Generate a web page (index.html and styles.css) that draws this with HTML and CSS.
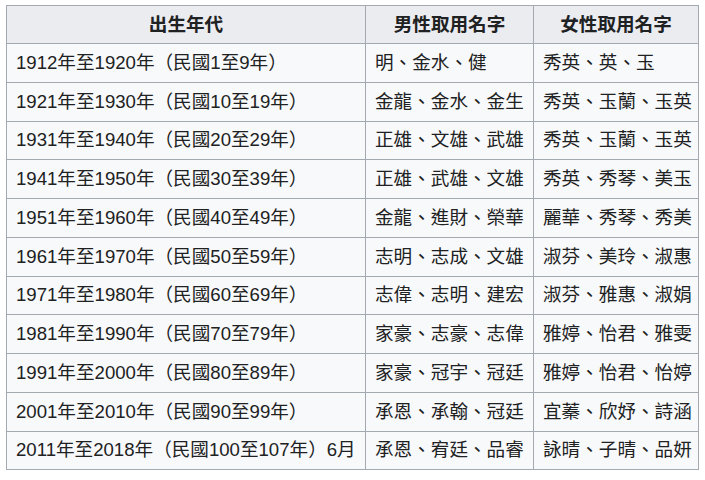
FILE: index.html
```html
<!DOCTYPE html>
<html lang="zh-Hant">
<head>
<meta charset="utf-8">
<link rel="stylesheet" href="styles.css">
</head>
<body>
<table class="wikitable">
  <thead>
    <tr><th class="c1">出生年代</th><th class="c2">男性取用名字</th><th class="c3">女性取用名字</th></tr>
  </thead>
  <tbody>
    <tr><td>1912年至1920年（民國1至9年）</td><td>明、金水、健</td><td>秀英、英、玉</td></tr>
    <tr><td>1921年至1930年（民國10至19年）</td><td>金龍、金水、金生</td><td>秀英、玉蘭、玉英</td></tr>
    <tr><td>1931年至1940年（民國20至29年）</td><td>正雄、文雄、武雄</td><td>秀英、玉蘭、玉英</td></tr>
    <tr><td>1941年至1950年（民國30至39年）</td><td>正雄、武雄、文雄</td><td>秀英、秀琴、美玉</td></tr>
    <tr><td>1951年至1960年（民國40至49年）</td><td>金龍、進財、榮華</td><td>麗華、秀琴、秀美</td></tr>
    <tr><td>1961年至1970年（民國50至59年）</td><td>志明、志成、文雄</td><td>淑芬、美玲、淑惠</td></tr>
    <tr><td>1971年至1980年（民國60至69年）</td><td>志偉、志明、建宏</td><td>淑芬、雅惠、淑娟</td></tr>
    <tr><td>1981年至1990年（民國70至79年）</td><td>家豪、志豪、志偉</td><td>雅婷、怡君、雅雯</td></tr>
    <tr><td>1991年至2000年（民國80至89年）</td><td>家豪、冠宇、冠廷</td><td>雅婷、怡君、怡婷</td></tr>
    <tr><td>2001年至2010年（民國90至99年）</td><td>承恩、承翰、冠廷</td><td>宜蓁、欣妤、詩涵</td></tr>
    <tr><td>2011年至2018年（民國100至107年）6月</td><td>承恩、宥廷、品睿</td><td>詠晴、子晴、品妍</td></tr>
  </tbody>
</table>
</body>
</html>
```

FILE: styles.css
```css
html, body {
  margin: 0;
  padding: 0;
  background: #ffffff;
}
body {
  padding: 5px 0 0 6px;
  font-family: "Liberation Sans", "Noto Sans CJK TC", sans-serif;
  font-size: 18.6px;
  color: #202122;
}
.wikitable {
  border-collapse: collapse;
  background: #f8f9fa;
  border: 1px solid #a2a9b1;
  table-layout: fixed;
  width: 692px;
}
.wikitable th,
.wikitable td {
  box-sizing: border-box;
  border: 1px solid #a2a9b1;
  padding: 0 9px;
  line-height: 20px;
  text-align: left;
  white-space: nowrap;
  overflow: hidden;
}
.wikitable th {
  background: #eaecf0;
  font-weight: bold;
  text-align: center;
  height: 38px;
}
.wikitable td {
  height: 38.75px;
}
.c1 { width: 359px; }
.c2 { width: 168px; }
.c3 { width: 165px; }
```
